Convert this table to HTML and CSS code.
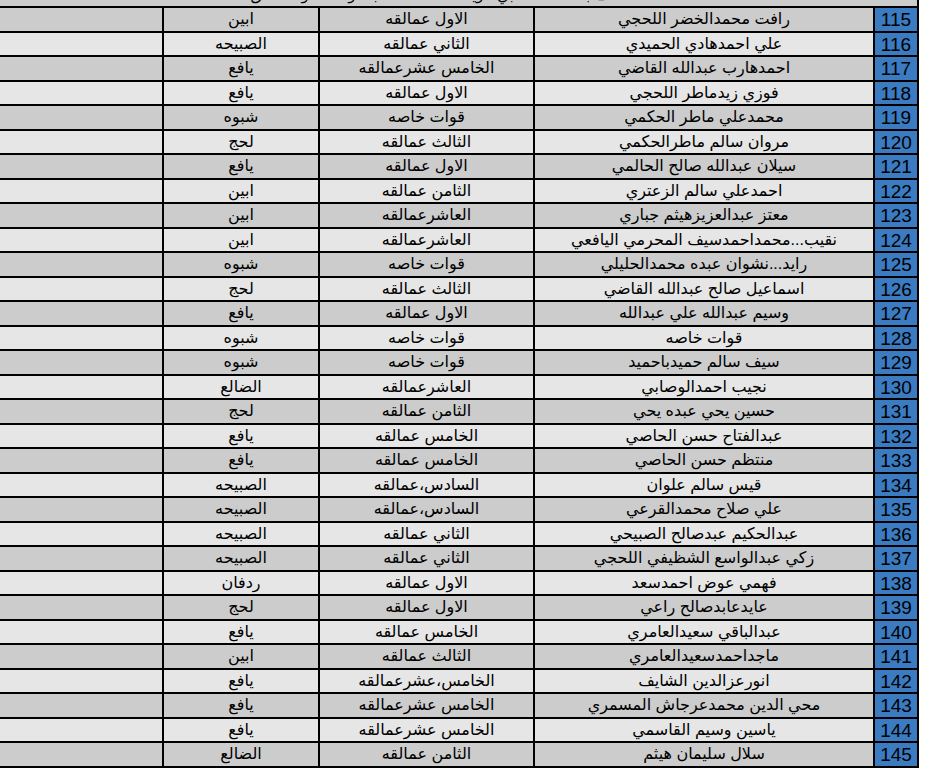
FILE: index.html
```html
<!DOCTYPE html>
<html lang="ar">
<head>
<meta charset="utf-8">
<title>كشف</title>
<link rel="stylesheet" href="styles.css">
</head>
<body>
<div class="sheet" dir="rtl">
  <div class="title"><span>كشف باسماء منتسبي الوية العمالقه حسب الوحدات والمناطق</span></div>
  <div class="row"><div class="c num">115</div><div class="c">رافت محمدالخضر اللحجي</div><div class="c">الاول عمالقه</div><div class="c">ابين</div><div class="c"></div></div>
  <div class="row"><div class="c num">116</div><div class="c">علي احمدهادي الحميدي</div><div class="c">الثاني عمالقه</div><div class="c">الصبيحه</div><div class="c"></div></div>
  <div class="row"><div class="c num">117</div><div class="c">احمدهارب عبدالله القاضي</div><div class="c">الخامس عشرعمالقه</div><div class="c">يافع</div><div class="c"></div></div>
  <div class="row"><div class="c num">118</div><div class="c">فوزي زيدماطر اللحجي</div><div class="c">الاول عمالقه</div><div class="c">يافع</div><div class="c"></div></div>
  <div class="row"><div class="c num">119</div><div class="c">محمدعلي ماطر الحكمي</div><div class="c">قوات خاصه</div><div class="c">شبوه</div><div class="c"></div></div>
  <div class="row"><div class="c num">120</div><div class="c">مروان سالم ماطرالحكمي</div><div class="c">الثالث عمالقه</div><div class="c">لحج</div><div class="c"></div></div>
  <div class="row"><div class="c num">121</div><div class="c">سيلان عبدالله صالح الحالمي</div><div class="c">الاول عمالقه</div><div class="c">يافع</div><div class="c"></div></div>
  <div class="row"><div class="c num">122</div><div class="c">احمدعلي سالم الزعتري</div><div class="c">الثامن عمالقه</div><div class="c">ابين</div><div class="c"></div></div>
  <div class="row"><div class="c num">123</div><div class="c">معتز عبدالعزيزهيثم جباري</div><div class="c">العاشرعمالقه</div><div class="c">ابين</div><div class="c"></div></div>
  <div class="row"><div class="c num">124</div><div class="c">نقيب...محمداحمدسيف المحرمي اليافعي</div><div class="c">العاشرعمالقه</div><div class="c">ابين</div><div class="c"></div></div>
  <div class="row"><div class="c num">125</div><div class="c">رايد...نشوان عبده محمدالحليلي</div><div class="c">قوات خاصه</div><div class="c">شبوه</div><div class="c"></div></div>
  <div class="row"><div class="c num">126</div><div class="c">اسماعيل صالح عبدالله القاضي</div><div class="c">الثالث عمالقه</div><div class="c">لحج</div><div class="c"></div></div>
  <div class="row"><div class="c num">127</div><div class="c">وسيم عبدالله علي عبدالله</div><div class="c">الاول عمالقه</div><div class="c">يافع</div><div class="c"></div></div>
  <div class="row"><div class="c num">128</div><div class="c">قوات خاصه</div><div class="c">قوات خاصه</div><div class="c">شبوه</div><div class="c"></div></div>
  <div class="row"><div class="c num">129</div><div class="c">سيف سالم حميدباحميد</div><div class="c">قوات خاصه</div><div class="c">شبوه</div><div class="c"></div></div>
  <div class="row"><div class="c num">130</div><div class="c">نجيب احمدالوصابي</div><div class="c">العاشرعمالقه</div><div class="c">الضالع</div><div class="c"></div></div>
  <div class="row"><div class="c num">131</div><div class="c">حسين يحي عبده يحي</div><div class="c">الثامن عمالقه</div><div class="c">لحج</div><div class="c"></div></div>
  <div class="row"><div class="c num">132</div><div class="c">عبدالفتاح حسن الحاصي</div><div class="c">الخامس عمالقه</div><div class="c">يافع</div><div class="c"></div></div>
  <div class="row"><div class="c num">133</div><div class="c">منتظم حسن الحاصي</div><div class="c">الخامس عمالقه</div><div class="c">يافع</div><div class="c"></div></div>
  <div class="row"><div class="c num">134</div><div class="c">قيس سالم علوان</div><div class="c">السادس،عمالقه</div><div class="c">الصبيحه</div><div class="c"></div></div>
  <div class="row"><div class="c num">135</div><div class="c">علي صلاح محمدالقرعي</div><div class="c">السادس،عمالقه</div><div class="c">الصبيحه</div><div class="c"></div></div>
  <div class="row"><div class="c num">136</div><div class="c">عبدالحكيم عبدصالح الصبيحي</div><div class="c">الثاني عمالقه</div><div class="c">الصبيحه</div><div class="c"></div></div>
  <div class="row"><div class="c num">137</div><div class="c">زكي عبدالواسع الشظيفي اللحجي</div><div class="c">الثاني عمالقه</div><div class="c">الصبيحه</div><div class="c"></div></div>
  <div class="row"><div class="c num">138</div><div class="c">فهمي عوض احمدسعد</div><div class="c">الاول عمالقه</div><div class="c">ردفان</div><div class="c"></div></div>
  <div class="row"><div class="c num">139</div><div class="c">عايدعابدصالح راعي</div><div class="c">الاول عمالقه</div><div class="c">لحج</div><div class="c"></div></div>
  <div class="row"><div class="c num">140</div><div class="c">عبدالباقي سعيدالعامري</div><div class="c">الخامس عمالقه</div><div class="c">يافع</div><div class="c"></div></div>
  <div class="row"><div class="c num">141</div><div class="c">ماجداحمدسعيدالعامري</div><div class="c">الثالث عمالقه</div><div class="c">ابين</div><div class="c"></div></div>
  <div class="row"><div class="c num">142</div><div class="c">انورعزالدين الشايف</div><div class="c">الخامس،عشرعمالقه</div><div class="c">يافع</div><div class="c"></div></div>
  <div class="row"><div class="c num">143</div><div class="c">محي الدين محمدعرجاش المسمري</div><div class="c">الخامس عشرعمالقه</div><div class="c">يافع</div><div class="c"></div></div>
  <div class="row"><div class="c num">144</div><div class="c">ياسين وسيم القاسمي</div><div class="c">الخامس عشرعمالقه</div><div class="c">يافع</div><div class="c"></div></div>
  <div class="row"><div class="c num">145</div><div class="c">سلال سليمان هيثم</div><div class="c">الثامن عمالقه</div><div class="c">الضالع</div><div class="c"></div></div>
</div>
</body>
</html>
```
FILE: styles.css
```css
html, body {
  margin: 0;
  padding: 0;
  background: #ffffff;
}

.sheet {
  width: 917px;
  padding-right: 2px;
  padding-bottom: 2px;
  background: #000000;
  display: grid;
  row-gap: 2px;
  font-family: "Liberation Sans", "DejaVu Sans", sans-serif;
  color: #000000;
}

.title {
  height: 6px;
  overflow: hidden;
  background: #cccccc;
  padding-right: 36px;
}

.title span {
  display: block;
  width: fit-content;
  margin: -13px auto 0;
  height: 16px;
  font-size: 15px;
  line-height: 16px;
  white-space: nowrap;
}

.row {
  display: grid;
  grid-template-columns: 42px 338px 213px 154px 162px;
  column-gap: 2px;
  height: 23px;
}

.row:nth-child(odd) {
  height: 22px;
}

.row:nth-child(even) .c {
  background: #cccccc;
}

.row:nth-child(odd) .c {
  background: #e6e6e6;
}

.c {
  text-align: center;
  font-size: 16px;
  line-height: 22px;
  white-space: nowrap;
  overflow: hidden;
}

.row .c.num {
  background: #3a7bc1;
  font-size: 19px;
  line-height: 23px;
  direction: ltr;
}
```
